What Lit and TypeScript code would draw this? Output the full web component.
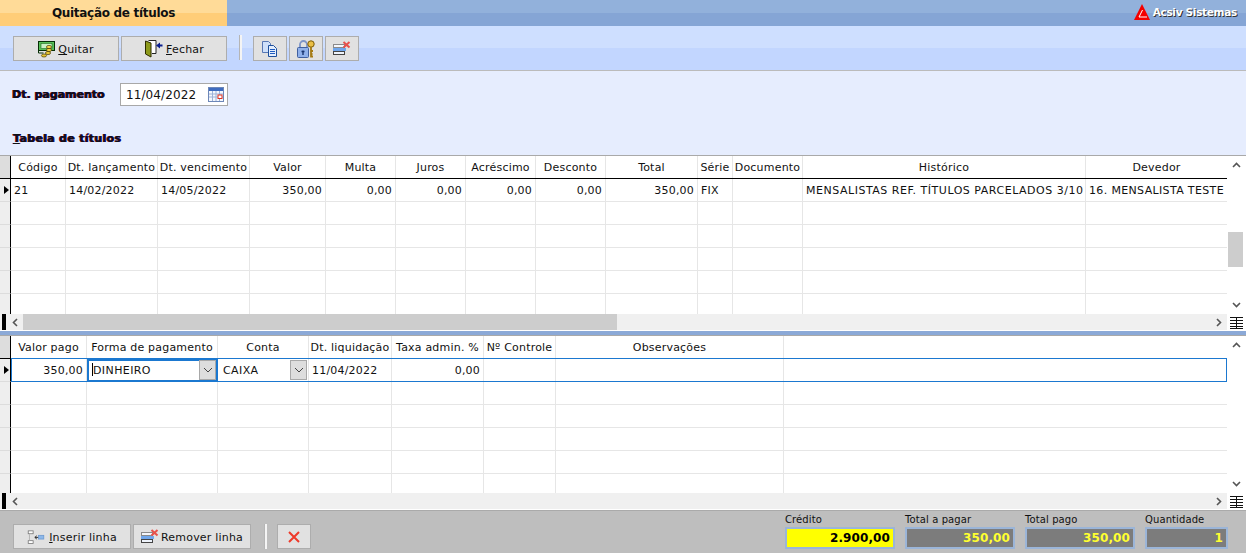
import { LitElement, html, css, svg, nothing } from 'lit';
import { customElement, property } from 'lit/decorators.js';

type Col = { title: string; width: number; align?: 'right'; tracking?: number };

const icons: Record<string, unknown> = {
  money: svg`<svg width="18" height="18" viewBox="0 0 18 18">
    <rect x=".5" y="1.500" width="16" height="9" fill="#58c058" stroke="#062f06"/>
    <rect x="3" y="3.500" width="11" height="5" fill="#c9f2c4" stroke="#1d6b1d" stroke-width=".6"/>
    <path d="M.5 10.500V13h5" fill="none" stroke="#062f06"/>
    <ellipse cx="11" cy="7" rx="2.600" ry="1.600" fill="#f1d24a" stroke="#4b3c00" stroke-width=".7"/>
    <ellipse cx="11" cy="10" rx="2.600" ry="1.600" fill="#f1d24a" stroke="#4b3c00" stroke-width=".7"/>
    <ellipse cx="10" cy="13" rx="2.600" ry="1.600" fill="#e8c534" stroke="#4b3c00" stroke-width=".7"/>
    <ellipse cx="6" cy="15.500" rx="2.600" ry="1.500" fill="#e8c534" stroke="#4b3c00" stroke-width=".7"/>
  </svg>`,
  door: svg`<svg width="20" height="20" viewBox="0 0 20 20">
    <path d="M4.500 1.500h7.500v13H8" fill="#fff" stroke="#222"/>
    <path d="M1.500 2l5.500 2v14l-5.500-3z" fill="#8d9a1c" stroke="#2c2c00"/>
    <path d="M18.500 5.500H16V3.500l-4 3 4 3V7.500h2.500z" fill="#0a1f8f"/>
  </svg>`,
  copy: svg`<svg width="18" height="18" viewBox="0 0 18 18">
    <path d="M1.500 1.500h6l2 2v9h-8z" fill="#cfe0fa" stroke="#5878b4"/>
    <path d="M7.500 5.500h5l3 3v8h-8z" fill="#e4eefd" stroke="#1d4f9c"/>
    <path d="M9 9.500h5M9 11.500h5M9 13.500h5" stroke="#1f5cc0"/>
  </svg>`,
  lock: svg`<svg width="20" height="20" viewBox="0 0 20 20">
    <path d="M4 9V5.500a3.500 3.500 0 0 1 7 0V9" fill="none" stroke="#7d94c8" stroke-width="1.800"/>
    <rect x="1.500" y="8.500" width="11" height="10" rx="1" fill="#8fb0ea" stroke="#3f5f9f"/>
    <path d="M7 11.500V16M5.500 12.500h3" stroke="#17336f" stroke-width="1.400"/>
    <circle cx="15" cy="5" r="3.200" fill="#eabf45" stroke="#7b5b09"/>
    <path d="M15 8v9.500h2M15 12h2M15 15h1.500" fill="none" stroke="#a57a12" stroke-width="1.800"/>
  </svg>`,
  remove: svg`<svg width="18" height="18" viewBox="0 0 18 18">
    <rect x=".5" y="4.500" width="11" height="3" fill="#f4f6fb" stroke="#8a8a8a"/>
    <rect x="0" y="8" width="13" height="3" fill="#6fa6ec"/>
    <rect x=".5" y="11.500" width="11" height="3" fill="#eef3fb" stroke="#444"/>
    <path d="M10.500 2l6 5.500M16.500 2l-6 5.500" stroke="#e8504a" stroke-width="2"/>
  </svg>`,
  insert: svg`<svg width="18" height="18" viewBox="0 0 22 18">
    <rect x="1.500" y="1.500" width="6" height="3.500" fill="#fff" stroke="#777"/>
    <rect x="1.500" y="13.500" width="6" height="3.500" fill="#fff" stroke="#777"/>
    <path d="M3 5.500v8" stroke="#aaa"/>
    <path d="M10 9.500h5M12 7.500l-2.500 2 2.500 2" fill="none" stroke="#111"/>
    <rect x="14" y="7" width="6.500" height="4.500" fill="#8db8ea" stroke="#6f9ad0"/>
  </svg>`,
  cancel: svg`<svg width="14" height="14" viewBox="0 0 14 14">
    <path d="M2 2l10 10M12 2L2 12" stroke="#ee3a2a" stroke-width="2"/>
  </svg>`,
  logo: svg`<svg width="16" height="16" viewBox="0 0 16 16">
    <path d="M8 0l8 16H0z" fill="#f50000"/>
    <path d="M8.500 6L5 13h8" fill="none" stroke="#fff"/>
  </svg>`,
  calendar: svg`<svg width="16" height="15" viewBox="0 0 16 15">
    <rect x=".5" y=".5" width="15" height="14" fill="#f4f7fd" stroke="#6d87b8"/>
    <rect x="1" y="1" width="14" height="3" fill="#3f6cc0"/>
    <path d="M1 7h14M1 10h14M4.500 4v10M8 4v10M11.500 4v10" stroke="#9db2d8"/>
    <rect x="10" y="8" width="4" height="3.500" fill="#fff" stroke="#e03020"/>
  </svg>`,
  gridMenu: svg`<svg width="13" height="12" viewBox="0 0 13 12">
    <path d="M0 .5h13M0 3.500h13M0 6.500h13M0 9.500h13M0 11.500h13M6.500 0v12" stroke="#111"/>
  </svg>`,
  up: svg`<svg width="9" height="6" viewBox="0 0 9 6"><path d="M1 5l3.500-3.500L8 5" fill="none" stroke="#555" stroke-width="1.600"/></svg>`,
  down: svg`<svg width="9" height="6" viewBox="0 0 9 6"><path d="M1 1l3.500 3.500L8 1" fill="none" stroke="#555" stroke-width="1.600"/></svg>`,
  left: svg`<svg width="6" height="9" viewBox="0 0 6 9"><path d="M5 1L1.500 4.500 5 8" fill="none" stroke="#555" stroke-width="1.600"/></svg>`,
  right: svg`<svg width="6" height="9" viewBox="0 0 6 9"><path d="M1 1l3.500 3.500L1 8" fill="none" stroke="#555" stroke-width="1.600"/></svg>`,
  chevron: svg`<svg width="10" height="6" viewBox="0 0 10 6"><path d="M1 1l4 4 4-4" fill="none" stroke="#444"/></svg>`,
};

@customElement('data-grid')
class DataGrid extends LitElement {
  @property({ attribute: false }) columns: Col[] = [];
  @property({ attribute: false }) cells: unknown[] = [];
  @property({ type: Boolean }) editing = false;
  @property({ type: Number }) thumb = 0;
  @property({ type: Number }) htrack = 0;

  static styles = css`
    :host {
      display: grid;
      grid-template-columns: 1fr 19px;
      grid-template-rows: 1fr 17px;
      height: 100%;
      background: #fff;
      font: 11px 'DejaVu Sans', Verdana, sans-serif;
      color: #111;
      border-top: 1px solid #a9a9a9;
      box-sizing: border-box;
    }
    .table {
      overflow: hidden;
      min-width: 0;
    }
    .row {
      display: flex;
      height: 23px;
      box-sizing: border-box;
      position: relative;
    }
    .head {
      border-bottom: 1px solid #000;
    }
    .ind {
      flex: none;
      box-sizing: border-box;
      background: #eee;
      border-bottom: 1px solid #dcdcdc;
      border-right: 1px solid #000;
      width: 11px;
      display: flex;
      align-items: center;
      justify-content: flex-end;
      padding-right: 1px;
    }
    .head .ind {
      background: #ddd;
      border-bottom: none;
    }
    .arrow {
      width: 0;
      height: 0;
      border-left: 5px solid #000;
      border-top: 4px solid transparent;
      border-bottom: 4px solid transparent;
    }
    .cell {
      flex: none;
      box-sizing: border-box;
      padding: 0 3px;
      line-height: 24px;
      white-space: nowrap;
      overflow: hidden;
      border-right: 1px solid #e6e6e6;
      border-bottom: 1px solid #e6e6e6;
      letter-spacing: 0.2px;
    }
    .head .cell {
      text-align: center;
      border-bottom: none;
      padding: 0;
    }
    .right {
      text-align: right;
    }
    .fill {
      flex: 1;
      border-right: none;
    }
    .selected::after {
      content: '';
      position: absolute;
      inset: -1px 0 0 11px;
      border: 1px solid #1b78d0;
      pointer-events: none;
    }
    .combo {
      position: relative;
      padding: 0 0 0 5px;
    }
    .combo .btn {
      position: absolute;
      right: 1px;
      top: 1px;
      width: 17px;
      height: 20px;
      background: #ddd;
      border: 1px solid #a8a8a8;
      box-sizing: border-box;
      display: flex;
      align-items: center;
      justify-content: center;
    }
    .focus {
      outline: 2px solid #1b78d0;
      outline-offset: -2px;
    }
    .caret {
      display: inline-block;
      width: 1px;
      height: 13px;
      background: #000;
      vertical-align: -2px;
    }
    .vbar {
      display: flex;
      flex-direction: column;
      align-items: center;
      justify-content: space-between;
      padding: 6px 0 6px;
      position: relative;
    }
    .vthumb {
      position: absolute;
      left: 1px;
      width: 15px;
      height: 35px;
      background: #cdcdcd;
    }
    .hbar {
      display: flex;
      align-items: center;
      background: #f0f0f0;
      border-bottom: 1px solid #fff;
      box-sizing: border-box;
    }
    .mark {
      width: 4px;
      height: 16px;
      background: #000;
      margin-left: 2px;
    }
    .hbtn {
      flex: none;
      width: 17px;
      display: flex;
      justify-content: center;
    }
    .track {
      flex: none;
      height: 100%;
      background: #cdcdcd;
    }
    .spacer {
      flex: 1;
    }
    .corner {
      display: flex;
      align-items: center;
      justify-content: center;
    }
  `;

  renderCell(col: Col, value: unknown, i: number, editable: boolean) {
    const fill = col.width === 0;
    const cls = `cell ${col.align === 'right' ? 'right' : ''} ${fill ? 'fill' : ''}`;
    const width = fill ? '' : `width:${col.width}px;`;
    const style = col.tracking ? `${width}letter-spacing:${col.tracking}px` : width;
    if (editable && i === 1) {
      return html`<div class="${cls} combo focus" style=${style}>
        <span class="caret"></span>${value}<span class="btn">${icons.chevron}</span>
      </div>`;
    }
    if (editable && i === 2) {
      return html`<div class="${cls} combo" style=${style}>
        ${value}<span class="btn">${icons.chevron}</span>
      </div>`;
    }
    return html`<div class=${cls} style=${style}>${value}</div>`;
  }

  render() {
    const empties = [0, 1, 2, 3, 4];
    return html`
      <div class="table">
        <div class="row head">
          <div class="ind"></div>
          ${this.columns.map(
            (c) =>
              html`<div class="cell ${c.width === 0 ? 'fill' : ''}"
                style=${c.width ? `width:${c.width}px` : nothing}>${c.title}</div>`
          )}
        </div>
        <div class="row ${this.editing ? 'selected' : ''}">
          <div class="ind"><span class="arrow"></span></div>
          ${this.columns.map((c, i) => this.renderCell(c, this.cells[i], i, this.editing))}
        </div>
        ${empties.map(
          () => html`<div class="row">
            <div class="ind"></div>
            ${this.columns.map((c, i) => this.renderCell(c, '', i, false))}
          </div>`
        )}
      </div>
      <div class="vbar">
        ${icons.up}
        ${this.thumb ? html`<div class="vthumb" style="top:${this.thumb}px"></div>` : nothing}
        ${icons.down}
      </div>
      <div class="hbar">
        <div class="mark"></div>
        <div class="hbtn">${icons.left}</div>
        ${this.htrack ? html`<div class="track" style="width:${this.htrack}px"></div>` : nothing}
        <div class="spacer"></div>
        <div class="hbtn">${icons.right}</div>
      </div>
      <div class="corner">${icons.gridMenu}</div>
    `;
  }
}

const titulosCols: Col[] = [
  { title: 'Código', width: 55 },
  { title: 'Dt. lançamento', width: 92 },
  { title: 'Dt. vencimento', width: 92 },
  { title: 'Valor', width: 76, align: 'right' },
  { title: 'Multa', width: 70, align: 'right' },
  { title: 'Juros', width: 70, align: 'right' },
  { title: 'Acréscimo', width: 70, align: 'right' },
  { title: 'Desconto', width: 70, align: 'right' },
  { title: 'Total', width: 92, align: 'right' },
  { title: 'Série', width: 35 },
  { title: 'Documento', width: 70 },
  { title: 'Histórico', width: 283, tracking: 0.52 },
  { title: 'Devedor', width: 142, tracking: 0.35 },
];

const titulosRow = [
  '21', '14/02/2022', '14/05/2022', '350,00', '0,00', '0,00', '0,00', '0,00', '350,00',
  'FIX', '', 'MENSALISTAS REF. TÍTULOS PARCELADOS 3/10', '16. MENSALISTA TESTE',
];

const pagamentoCols: Col[] = [
  { title: 'Valor pago', width: 76, align: 'right' },
  { title: 'Forma de pagamento', width: 131, tracking: 0.4 },
  { title: 'Conta', width: 91, tracking: 0.4 },
  { title: 'Dt. liquidação', width: 83 },
  { title: 'Taxa admin. %', width: 92, align: 'right' },
  { title: 'Nº Controle', width: 72 },
  { title: 'Observações', width: 228 },
  { title: '', width: 0 },
];

const pagamentoRow = ['350,00', 'DINHEIRO', 'CAIXA', '11/04/2022', '0,00', '', '', ''];

const totals = [
  { label: 'Crédito', value: '2.900,00', width: 110, highlight: true },
  { label: 'Total a pagar', value: '350,00', width: 110 },
  { label: 'Total pago', value: '350,00', width: 110 },
  { label: 'Quantidade', value: '1', width: 83 },
];

@customElement('app-root')
export class AppRoot extends LitElement {
  static styles = css`
    :host {
      display: flex;
      flex-direction: column;
      width: 1246px;
      height: 553px;
      overflow: hidden;
      font: 11px 'DejaVu Sans', Verdana, sans-serif;
      color: #111;
      background: #e6edfe;
    }
    .titlebar {
      flex: none;
      height: 26px;
      display: flex;
      background: linear-gradient(#92b1db 13px, #85a5d5 13px);
    }
    .tab {
      width: 227px;
      text-align: center;
      font-weight: bold;
      font-size: 12px;
      letter-spacing: -0.3px;
      line-height: 27px;
      background: linear-gradient(#ffdb98 13px, #ffcd78 13px);
    }
    .brand {
      margin-left: auto;
      padding: 0 9px 2px 0;
      display: flex;
      align-items: center;
      gap: 3px;
      color: #fff;
      font-weight: bold;
      font-size: 10.500px;
      letter-spacing: -0.3px;
      text-shadow: 1px 1px 0 #333;
    }
    .toolbar {
      flex: none;
      height: 45px;
      box-sizing: border-box;
      display: flex;
      align-items: flex-start;
      padding: 10px 0 0 13px;
      background: linear-gradient(#cedfff 22px, #c2d6ff 22px);
      border-bottom: 1px solid #bbb;
    }
    .btn {
      height: 25px;
      box-sizing: border-box;
      display: flex;
      align-items: center;
      justify-content: center;
      gap: 2px;
      margin-right: 2px;
      background: #e1e1e1;
      border: 1px solid #adadad;
      letter-spacing: 0.2px;
    }
    .btn span {
      padding-top: 2px;
    }
    .wide {
      width: 106px;
    }
    .small {
      width: 34px;
    }
    .divider {
      width: 2px;
      height: 25px;
      margin: -1px 11px 0 11px;
      background: #f4f4f4;
      box-shadow: -1px 0 0 #b5b5b5;
    }
    .form {
      flex: none;
      height: 84px;
      box-sizing: border-box;
      padding: 12px 0 0 12px;
    }
    .field {
      display: flex;
      align-items: flex-start;
    }
    .label {
      font-weight: bold;
      width: 108px;
      line-height: 24px;
      text-shadow: 0.6px 0 0 #00008a, -0.4px 0 0 #b00000;
    }
    .date {
      width: 108px;
      height: 23px;
      box-sizing: border-box;
      display: flex;
      align-items: center;
      justify-content: space-between;
      padding: 0 3px 0 5px;
      background: #fff;
      border: 1px solid #a8a8a8;
      font-size: 12px;
      letter-spacing: 0.1px;
    }
    .section {
      margin: 25px 0 0 1px;
      font-weight: bold;
      letter-spacing: 0.3px;
      text-shadow: 0.6px 0 0 #00008a, -0.4px 0 0 #b00000;
    }
    .grid1 {
      flex: none;
      height: 176px;
    }
    .split {
      flex: none;
      height: 4px;
      background: #8ba9d7;
    }
    .grid2 {
      flex: none;
      height: 175px;
    }
    .footer {
      flex: 1;
      display: flex;
      align-items: flex-start;
      padding: 13px 18px 0 13px;
      background: #bebebe;
      border-top: 1px solid #aaa;
    }
    .insert {
      width: 118px;
      gap: 4px;
    }
    .removeline {
      width: 118px;
    }
    .footer .divider {
      margin: 0 10px 0 12px;
    }
    .totals {
      margin: -11px 0 0 auto;
      display: flex;
      gap: 10px;
    }
    .total {
      display: flex;
      flex-direction: column;
      font-size: 10px;
      letter-spacing: 0.1px;
    }
    .total span {
      line-height: 13px;
      height: 14px;
    }
    .amount {
      height: 22px;
      box-sizing: border-box;
      border: 2px solid #9bb5d8;
      background: #7c7c7c;
      color: #ffff30;
      font-weight: bold;
      font-size: 12px;
      line-height: 18px;
      text-align: right;
      padding-right: 3px;
    }
    .highlight {
      background: #ffff00;
      color: #000;
    }
  `;

  render() {
    return html`
      <div class="titlebar">
        <div class="tab">Quitação de títulos</div>
        <div class="brand">${icons.logo}<span>Acsiv Sistemas</span></div>
      </div>
      <div class="toolbar">
        <div class="btn wide">${icons.money}<span><u>Q</u>uitar</span></div>
        <div class="btn wide">${icons.door}<span><u>F</u>echar</span></div>
        <div class="divider"></div>
        <div class="btn small">${icons.copy}</div>
        <div class="btn small">${icons.lock}</div>
        <div class="btn small">${icons.remove}</div>
      </div>
      <div class="form">
        <div class="field">
          <div class="label">Dt. pagamento</div>
          <div class="date"><span>11/04/2022</span>${icons.calendar}</div>
        </div>
        <div class="section"><u>T</u>abela de títulos</div>
      </div>
      <div class="grid1">
        <data-grid .columns=${titulosCols} .cells=${titulosRow} .thumb=${76} .htrack=${594}></data-grid>
      </div>
      <div class="split"></div>
      <div class="grid2">
        <data-grid .columns=${pagamentoCols} .cells=${pagamentoRow} .editing=${true}></data-grid>
      </div>
      <div class="footer">
        <div class="btn insert">${icons.insert}<span><u>I</u>nserir linha</span></div>
        <div class="btn removeline">${icons.remove}<span>Remover linha</span></div>
        <div class="divider"></div>
        <div class="btn small">${icons.cancel}</div>
        <div class="totals">
          ${totals.map(
            (t) => html`<div class="total" style="width:${t.width}px">
              <span>${t.label}</span>
              <div class="amount ${t.highlight ? 'highlight' : ''}">${t.value}</div>
            </div>`
          )}
        </div>
      </div>
    `;
  }
}
